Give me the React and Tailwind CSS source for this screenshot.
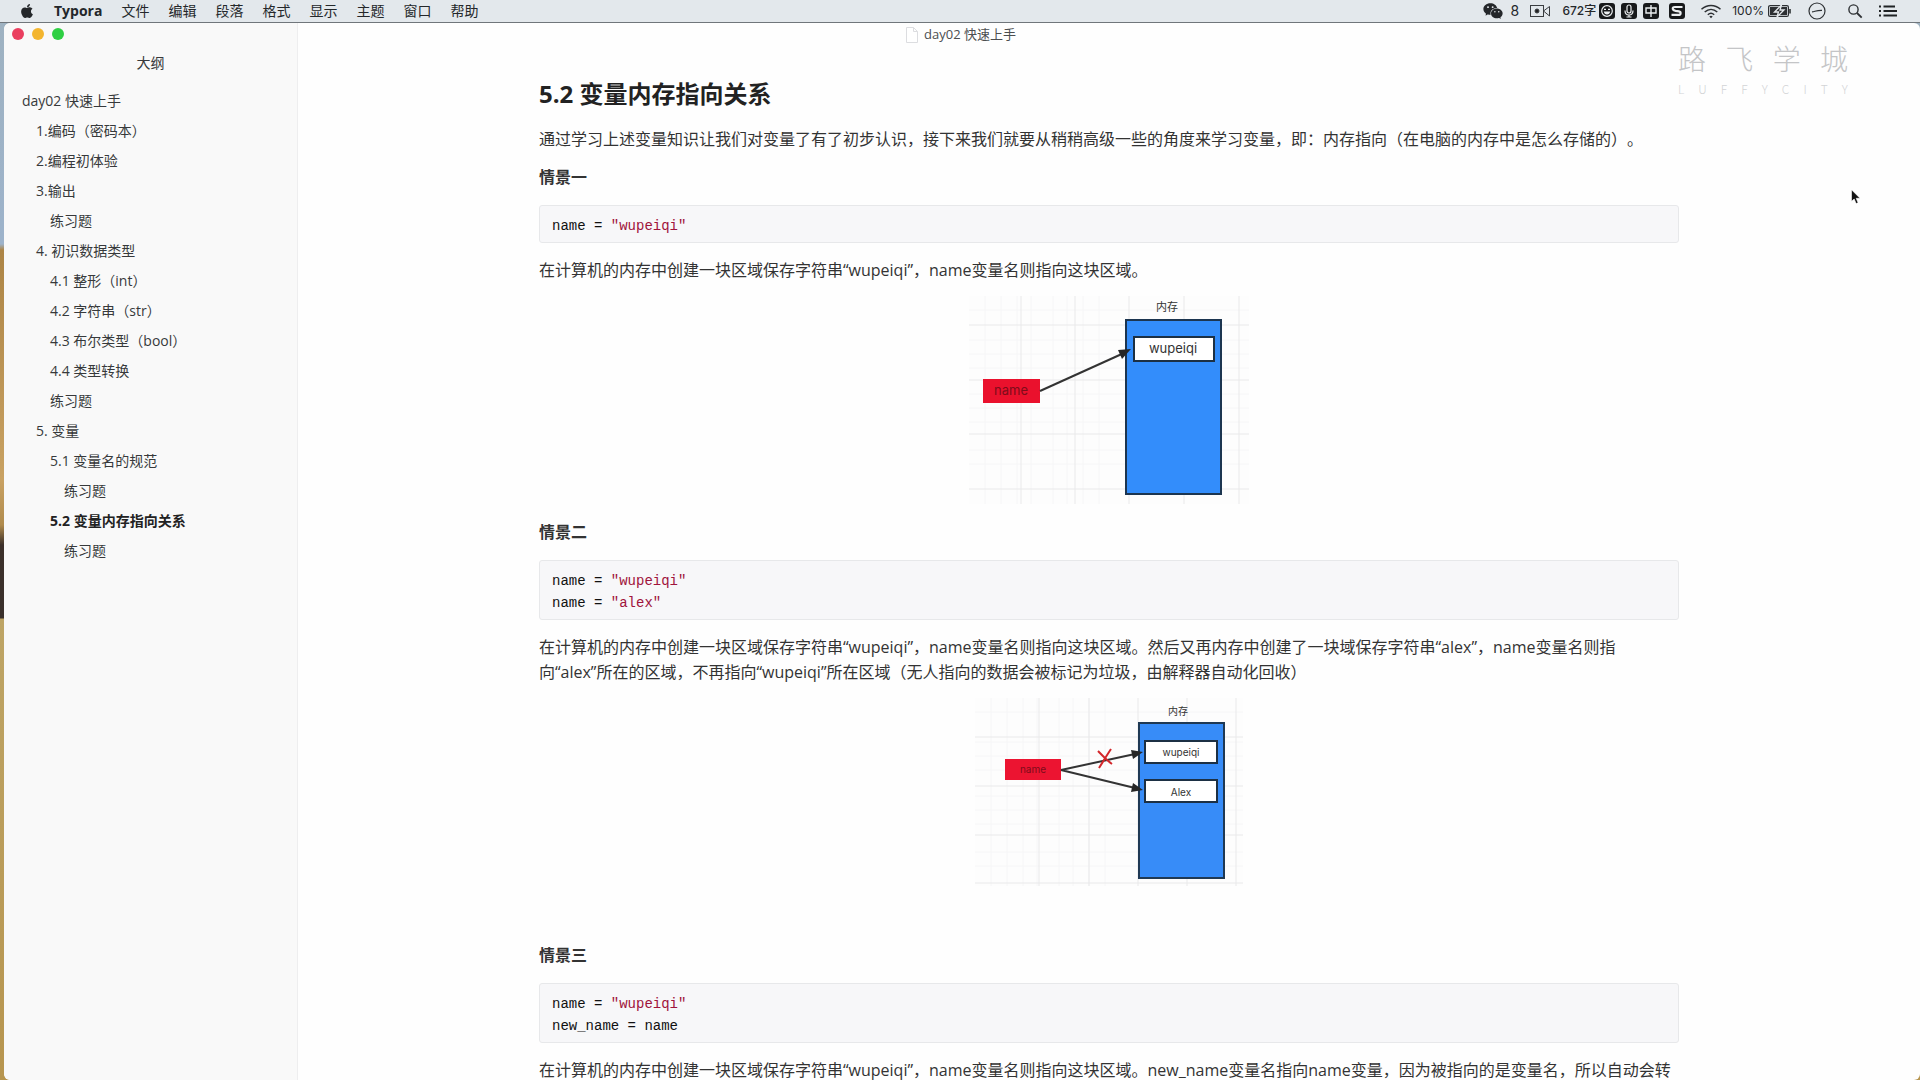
import { FaApple } from "react-icons/fa";
import { AiFillWechat } from "react-icons/ai";

const MENUS = ["文件", "编辑", "段落", "格式", "显示", "主题", "窗口", "帮助"];

const OUTLINE = [
  { text: "day02 快速上手", level: 0 },
  { text: "1.编码（密码本）", level: 1 },
  { text: "2.编程初体验", level: 1 },
  { text: "3.输出", level: 1 },
  { text: "练习题", level: 2 },
  { text: "4. 初识数据类型", level: 1 },
  { text: "4.1 整形（int）", level: 2 },
  { text: "4.2 字符串（str）", level: 2 },
  { text: "4.3 布尔类型（bool）", level: 2 },
  { text: "4.4 类型转换", level: 2 },
  { text: "练习题", level: 2 },
  { text: "5. 变量", level: 1 },
  { text: "5.1 变量名的规范", level: 2 },
  { text: "练习题", level: 3 },
  { text: "5.2 变量内存指向关系", level: 2, active: true },
  { text: "练习题", level: 3 },
];

const INDENT = ["pl-[18px]", "pl-8", "pl-[46px]", "pl-[60px]"];

function SmileBadge() {
  return (
    <svg className="size-4" viewBox="0 0 16 16">
      <rect width="16" height="16" rx="3" fill="#17191b" />
      <circle cx="8" cy="8" r="5.3" fill="none" stroke="#eceff1" strokeWidth="1.2" />
      <path d="M4.8 8.600h6.400c-.3 2-1.600 3-3.200 3s-2.900-1-3.200-3z" fill="#eceff1" />
      <path d="M5 6.400h2M9 6.400h2" stroke="#eceff1" strokeWidth="1.200" />
    </svg>
  );
}

function MicBadge() {
  return (
    <svg className="size-4" viewBox="0 0 16 16">
      <rect width="16" height="16" rx="3" fill="#17191b" />
      <rect x="6" y="2" width="4" height="8" rx="2" fill="none" stroke="#eceff1" strokeWidth="1.200" />
      <path d="M4 7.500c0 3 1.600 4.500 4 4.500s4-1.500 4-4.500M8 12v2.200M5.500 14h5" fill="none" stroke="#eceff1" strokeWidth="1.200" />
    </svg>
  );
}

function ChineseBadge() {
  return (
    <svg className="size-4" viewBox="0 0 16 16">
      <rect width="16" height="16" rx="3" fill="#17191b" />
      <path d="M3 5h10v5H3zM8 2v12" fill="none" stroke="#eceff1" strokeWidth="1.400" />
    </svg>
  );
}

function SogouBadge() {
  return (
    <svg className="size-4" viewBox="0 0 16 16">
      <rect width="16" height="16" rx="3" fill="#17191b" />
      <path d="M13.500 4H6C4.200 4 3.600 4.900 3.800 6c.2 1.100 1.200 1.500 2.800 1.800l3.300.5c2.400.5 2.300 3.600-.6 3.600H2.500" fill="none" stroke="#eceff1" strokeWidth="2.200" />
    </svg>
  );
}

function CameraIcon() {
  return (
    <svg className="h-4 w-5" viewBox="0 0 20 16" fill="none" stroke="#3a3d40">
      <rect x=".5" y="2.500" width="13" height="11" />
      <path d="M13.500 8l6-4.500v9.500z" />
      <circle cx="7" cy="8" r="2" fill="#222" />
    </svg>
  );
}

function WifiIcon() {
  return (
    <svg className="h-4 w-[22px]" viewBox="0 0 22 16" fill="none" stroke="#2d3033" strokeWidth="1.500">
      <path d="M1.500 6.200c5.500-5 13.500-5 19 0M4.700 9c3.800-3.300 8.800-3.300 12.600 0M7.800 11.700c2-1.700 4.400-1.700 6.400 0" />
      <path d="M9.300 13.400c1-.8 2.400-.8 3.400 0L11 15.300z" fill="#2d3033" stroke="none" />
    </svg>
  );
}

function BatteryIcon() {
  return (
    <svg className="h-3.5 w-6" viewBox="0 0 24 14">
      <rect x=".6" y="1.600" width="19.800" height="10.800" rx="1.500" fill="none" stroke="#2d3033" strokeWidth="1.200" />
      <rect x="2" y="3" width="17" height="8" fill="#2d3033" />
      <path d="M13.500 1L6.500 8h4l-1.500 5 7-7h-4z" fill="#2d3033" stroke="#e5e9ed" strokeWidth="1.300" />
      <path d="M22 5v4.500" stroke="#2d3033" strokeWidth="1.600" />
    </svg>
  );
}

function DndIcon() {
  return (
    <svg className="size-[18px]" viewBox="0 0 18 18" fill="none" stroke="#2d3033" strokeWidth="1.200">
      <circle cx="9" cy="9" r="8" />
      <path d="M4 9.800c3-.2 4-1.600 10-1.500" />
    </svg>
  );
}

function SearchIcon() {
  return (
    <svg className="size-4" viewBox="0 0 16 16" fill="none" stroke="#2d3033">
      <circle cx="6.500" cy="6.500" r="4.600" strokeWidth="1.400" />
      <path d="M10 10l4.700 4.700" strokeWidth="1.800" />
    </svg>
  );
}

function ListIcon() {
  return (
    <svg className="h-3.5 w-[18px]" viewBox="0 0 18 14" stroke="#1f2224" strokeWidth="1.800">
      <path d="M0 2.500h2M4.500 2.500H16M0 7h2M4.500 7H18M0 11.500h2M4.500 11.500H18" />
    </svg>
  );
}

function MenuBar() {
  return (
    <header className="flex h-[23px] shrink-0 items-center border-b border-[#70767b] bg-[#e3e8ec] pr-[23px] pl-[19px] text-[#24272a]">
      <button type="button" aria-label="Apple" className="mr-[19px]">
        <FaApple className="size-4" />
      </button>
      <nav className="flex items-center gap-[19px] text-sm leading-5 whitespace-nowrap">
        <button type="button" className="font-bold">Typora</button>
        {MENUS.map((m) => (
          <button type="button" key={m}>{m}</button>
        ))}
      </nav>
      <div className="ml-auto flex items-center whitespace-nowrap font-['Inter','Noto_Sans_CJK_SC',sans-serif] text-xs">
        <AiFillWechat className="size-[22px]" />
        <span className="ml-1.5 w-5 text-sm">8</span>
        <CameraIcon />
        <span className="mr-[3px] ml-3 font-medium">672字</span>
        <div className="flex gap-1.5">
          <SmileBadge />
          <MicBadge />
          <ChineseBadge />
        </div>
        <div className="mr-[15px] ml-2.5"><SogouBadge /></div>
        <WifiIcon />
        <span className="mr-1 ml-2.5">100%</span>
        <BatteryIcon />
        <div className="ml-4"><DndIcon /></div>
        <button type="button" aria-label="搜索" className="ml-[21px]"><SearchIcon /></button>
        <button type="button" aria-label="通知中心" className="ml-4"><ListIcon /></button>
      </div>
    </header>
  );
}

function Sidebar() {
  return (
    <aside className="w-[294px] shrink-0 rounded-l-md border-r border-[#eeeeef] bg-[#f9f9f9] text-sm text-[#37393b]">
      <div className="flex gap-2 px-2 pt-[5px]">
        <button type="button" aria-label="关闭" className="size-3 rounded-full bg-[#ea3f5f]" />
        <button type="button" aria-label="最小化" className="size-3 rounded-full bg-[#f3b52f]" />
        <button type="button" aria-label="缩放" className="size-3 rounded-full bg-[#2fcf43]" />
      </div>
      <h2 className="mt-3 mb-3 text-center leading-[22px]">大纲</h2>
      <ul>
        {OUTLINE.map((item, i) => (
          <li key={i} className={INDENT[item.level]}>
            <a href="#s52" className={item.active ? "block leading-[30px] font-bold text-[#222]" : "block leading-[30px]"}>
              {item.text}
            </a>
          </li>
        ))}
      </ul>
    </aside>
  );
}

function Code({ children }) {
  return (
    <pre className="my-[15px] rounded-[3px] border border-[#e7e8ea] bg-[#f7f7f9] px-3 pt-[9px] pb-[5px] font-['Liberation_Mono',monospace] text-sm leading-[22px] text-[#111]">
      <code className="font-['Liberation_Mono',monospace]">{children}</code>
    </pre>
  );
}

function Str({ children }) {
  return <span className="text-[#a0143c]">{children}</span>;
}

function Grid({ xs, ys, w, h }) {
  return (
    <g>
      <rect width={w} height={h} fill="#fdfdfd" />
      <g stroke="#f6f6f7">
        {[16, 32, 48, 62, 84, 98, 114, 130].map((x) => (
          <path key={x} d={`M${x} 0V${h}`} />
        ))}
        {[14, 44, 58, 72, 98, 112, 126, 154, 168].map((y) => (
          <path key={y} d={`M0 ${y}H${w}`} />
        ))}
      </g>
      <g stroke="#e9e9ea">
        {xs.map((x) => (
          <path key={x} d={`M${x} 0V${h}`} />
        ))}
        {ys.map((y) => (
          <path key={y} d={`M0 ${y}H${w}`} />
        ))}
      </g>
    </g>
  );
}

function DiagramOne() {
  return (
    <svg className="mx-auto mt-[13px] mb-4 block h-[208px] w-[280px] font-['Inter','Noto_Sans_CJK_SC',sans-serif]" viewBox="0 0 280 208" role="img" aria-label="name 指向 wupeiqi">
      <Grid xs={[52, 106, 160, 215, 270]} ys={[29, 84, 138, 193]} w={280} h={208} />
      <text x="198" y="15" fontSize="11" textAnchor="middle" fill="#333">内存</text>
      <rect x="157" y="24" width="95" height="174" fill="#338dfb" stroke="#1c3550" strokeWidth="2" />
      <rect x="165" y="41" width="80" height="24" fill="#fff" stroke="#1c3044" strokeWidth="2" />
      <text x="204" y="57" fontSize="13" textAnchor="middle" fill="#333">wupeiqi</text>
      <rect x="14" y="83" width="57" height="24" fill="#ea112d" />
      <text x="42" y="99" fontSize="13" textAnchor="middle" fill="#7d0c1a">name</text>
      <path d="M71 95L155 57" stroke="#333" strokeWidth="2" />
      <path d="M162 53l-9 10-4-9z" fill="#262626" />
    </svg>
  );
}

function DiagramTwo() {
  return (
    <svg className="mx-auto mt-[13px] block h-[188px] w-[268px] font-['Inter','Noto_Sans_CJK_SC',sans-serif]" viewBox="0 0 268 188" role="img" aria-label="name 改为指向 Alex">
      <Grid xs={[64, 114, 163, 212, 261]} ys={[39, 88, 137, 185]} w={268} h={188} />
      <text x="203" y="17" fontSize="10" textAnchor="middle" fill="#333">内存</text>
      <rect x="164" y="25" width="85" height="155" fill="#378cf8" stroke="#1f3954" strokeWidth="2" />
      <rect x="170" y="43" width="72" height="22" fill="#fff" stroke="#1c3044" strokeWidth="2" />
      <text x="206" y="58" fontSize="10" textAnchor="middle" fill="#333">wupeiqi</text>
      <rect x="170" y="82" width="72" height="22" fill="#fff" stroke="#1c3044" strokeWidth="2" />
      <text x="206" y="98" fontSize="10" textAnchor="middle" fill="#333">Alex</text>
      <rect x="30" y="61" width="56" height="21" fill="#ec1431" />
      <text x="58" y="75" fontSize="10" textAnchor="middle" fill="#7d0c1a">name</text>
      <path d="M86 72L160 56M86 72L160 90" stroke="#333" strokeWidth="2" />
      <path d="M168 54l-10 7-2-9zM168 92l-12 2 2-9z" fill="#262626" />
      <path d="M123 53c4 4 8 9 14 13M136 51c-4 6-7 11-12 19" stroke="#d3262a" strokeWidth="2" fill="none" />
    </svg>
  );
}

function Watermark() {
  return (
    <div aria-hidden="true" className="absolute top-[19px] right-[72px] w-[170px] font-['Noto_Sans_CJK_SC',sans-serif] font-light">
      <div className="flex justify-between text-[28px] leading-8 text-[#c4c5c7]">
        {"路飞学城".split("").map((c, i) => (
          <span key={i}>{c}</span>
        ))}
      </div>
      <div className="mt-[7px] flex justify-between text-xs leading-4 text-[#d3d4d6]">
        {"LUFFYCITY".split("").map((c, i) => (
          <span key={i}>{c}</span>
        ))}
      </div>
    </div>
  );
}

export default function App() {
  return (
    <div className="flex h-screen flex-col overflow-hidden bg-[linear-gradient(to_bottom,#9fb2c0_0,#9db3cb_244px,#ad8546_250px,#c9a263_480px,#b08b4d_525px,#3c302a_545px,#3a302c_618px,#bea566_619px,#b7954f_100%)] font-['Open_Sans','Noto_Sans_CJK_SC',sans-serif] [text-spacing-trim:space-all]">
      <MenuBar />
      <div className="relative ml-1 flex min-h-0 flex-1 overflow-hidden rounded-md bg-[#fefefe]">
        <Sidebar />
        <main className="min-w-0 flex-1">
          <div className="flex h-[23px] items-center justify-center gap-1.5 pr-[296px] text-[13px] text-[#4c4e50]">
            <svg className="h-4 w-3" viewBox="0 0 12 16" fill="#fff" stroke="#dcdde0">
              <path d="M.500.500h7l4 4v11H.500zM7.500.500v4h4" />
            </svg>
            day02 快速上手
          </div>
          <article className="mx-auto max-w-[1140px] text-base leading-[25px] text-[#333]">
            <h1 id="s52" className="mt-[30px] mb-[15px] text-2xl leading-9 font-bold text-[#222]">5.2 变量内存指向关系</h1>
            <p className="my-[13px]">通过学习上述变量知识让我们对变量了有了初步认识，接下来我们就要从稍稍高级一些的角度来学习变量，即：内存指向（在电脑的内存中是怎么存储的）。</p>
            <p className="font-bold">情景一</p>
            <Code>name = <Str>"wupeiqi"</Str></Code>
            <p>在计算机的内存中创建一块区域保存字符串“wupeiqi”，name变量名则指向这块区域。</p>
            <DiagramOne />
            <p className="font-bold">情景二</p>
            <Code>name = <Str>"wupeiqi"</Str>{"\n"}name = <Str>"alex"</Str></Code>
            <p>在计算机的内存中创建一块区域保存字符串“wupeiqi”，name变量名则指向这块区域。然后又再内存中创建了一块域保存字符串“alex”，name变量名则指向“alex”所在的区域，不再指向“wupeiqi”所在区域（无人指向的数据会被标记为垃圾，由解释器自动化回收）</p>
            <DiagramTwo />
            <p className="mt-[57px] font-bold">情景三</p>
            <Code>name = <Str>"wupeiqi"</Str>{"\n"}new_name = name</Code>
            <p>在计算机的内存中创建一块区域保存字符串“wupeiqi”，name变量名则指向这块区域。new_name变量名指向name变量，因为被指向的是变量名，所以自动会转</p>
          </article>
        </main>
        <Watermark />
        <svg aria-hidden="true" className="absolute top-[166px] right-[59px] h-4 w-2.5" viewBox="0 0 10 16">
          <path d="M.500.800v11.500l2.700-2.300 1.900 4.600 2-.8-1.900-4.500H9z" fill="#111" stroke="#fff" strokeWidth=".6" />
        </svg>
      </div>
    </div>
  );
}
